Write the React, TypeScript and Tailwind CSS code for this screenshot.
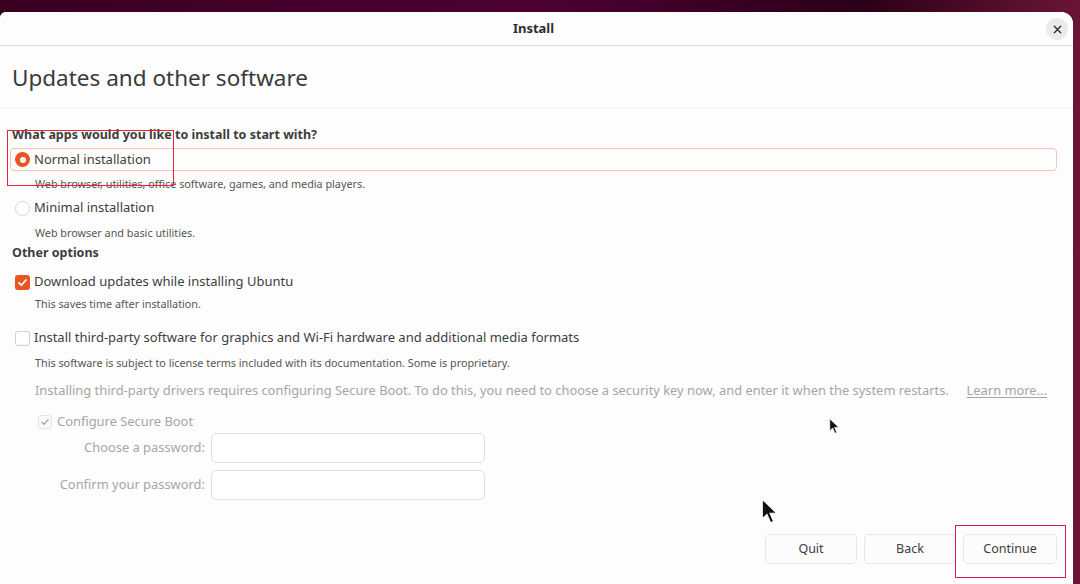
import React from "react";

const font = { fontFamily: '"Noto Sans", "Open Sans", sans-serif' };

function Radio({ checked }: { checked?: boolean }) {
  return checked ? (
    <span className="flex h-[15px] w-[15px] items-center justify-center rounded-full bg-[#e95420]">
      <span className="h-[6px] w-[6px] rounded-full bg-white" />
    </span>
  ) : (
    <span className="h-[15px] w-[15px] rounded-full border border-[#d6d6d6] bg-white" />
  );
}

function Check({ checked, disabled }: { checked?: boolean; disabled?: boolean }) {
  if (checked && !disabled) {
    return (
      <span className="flex h-[15px] w-[15px] items-center justify-center rounded-[3px] bg-[#e95420]">
        <svg width="11" height="11" viewBox="0 0 11 11">
          <path d="M2 5.8 L4.4 8.2 L9 3" fill="none" stroke="white" strokeWidth="1.8" strokeLinecap="round" strokeLinejoin="round" />
        </svg>
      </span>
    );
  }
  if (checked && disabled) {
    return (
      <span className="flex h-[14px] w-[14px] items-center justify-center rounded-[3px] border border-[#e4e4e4] bg-[#fafafa]">
        <svg width="10" height="10" viewBox="0 0 11 11">
          <path d="M2 5.8 L4.4 8.2 L9 3" fill="none" stroke="#9a9a9a" strokeWidth="1.3" strokeLinecap="round" strokeLinejoin="round" />
        </svg>
      </span>
    );
  }
  return <span className="h-[15px] w-[15px] rounded-[3px] border border-[#d0d0d0] bg-white" />;
}

function Cursor({ size }: { size: number }) {
  return (
    <svg width={size * 0.7} height={size} viewBox="0 0 14 20">
      <path d="M1 1 L1 16 L4.6 12.6 L7.4 19 L9.6 18 L6.9 11.8 L12 11.6 Z" fill="#111" stroke="#fff" strokeWidth="0.8" />
    </svg>
  );
}

export default function App() {
  return (
    <div className="relative h-[584px] w-[1080px] overflow-hidden bg-[linear-gradient(90deg,#3a0020_0%,#4c0032_50%,#2c0018_80%,#6a1535_100%)] pr-[7px] pt-[12px]" style={font}>
      <div className="flex h-full flex-col rounded-tl-[6px] rounded-tr-[12px] bg-[#fdfdfd]">
        {/* header bar */}
        <div className="relative flex h-[34px] shrink-0 items-center justify-center rounded-tl-[6px] rounded-tr-[12px] border-b border-[#d9d9d9] bg-[#fdfdfd] pr-[6px]">
          <span className="text-[13px] font-bold text-[#2e2e2e]">Install</span>
          <span className="absolute right-[5px] top-[6px] flex h-[22px] w-[22px] items-center justify-center rounded-full bg-[#ebebeb]">
            <svg width="9" height="9" viewBox="0 0 10 10">
              <path d="M1.5 1.5 L8.5 8.5 M8.5 1.5 L1.5 8.5" stroke="#333" strokeWidth="1.6" strokeLinecap="round" />
            </svg>
          </span>
        </div>

        {/* page title */}
        <div className="flex h-[62px] shrink-0 items-center border-b border-[#f2f2f2] pl-[12px] pt-[3px]">
          <h1 className="text-[22.5px] text-[#3a3a3a]">Updates and other software</h1>
        </div>

        <div className="flex flex-1 flex-col pl-[12px] pr-[16px] pt-[19px] text-[#3d3d3d]">
          <div className="text-[12.5px] font-bold leading-[16px]">What apps would you like to install to start with?</div>

          <div className="-ml-[2px] mt-[5px] flex h-[23px] items-center gap-[4px] rounded-[4px] border border-[#f4c4b4] pl-[4px]">
            <Radio checked />
            <span className="text-[13px]">Normal installation</span>
          </div>
          <div className="mt-[6px] pl-[23px] text-[10.8px] leading-[14px] text-[#555]">Web browser, utilities, office software, games, and media players.</div>

          <div className="mt-[7px] flex h-[20px] items-center gap-[4px] pl-[3px]">
            <Radio />
            <span className="text-[13px]">Minimal installation</span>
          </div>
          <div className="mt-[8px] pl-[23px] text-[10.8px] leading-[14px] text-[#555]">Web browser and basic utilities.</div>

          <div className="mt-[5px] text-[12.5px] font-bold leading-[16px]">Other options</div>

          <div className="mt-[12px] flex h-[18px] items-center gap-[4px] pl-[3px]">
            <Check checked />
            <span className="text-[13px]">Download updates while installing Ubuntu</span>
          </div>
          <div className="mt-[6px] pl-[23px] text-[10.8px] leading-[14px] text-[#555]">This saves time after installation.</div>

          <div className="mt-[18px] flex h-[18px] items-center gap-[4px] pl-[3px]">
            <Check />
            <span className="text-[13px]">Install third-party software for graphics and Wi-Fi hardware and additional media formats</span>
          </div>
          <div className="mt-[9px] pl-[23px] text-[10.8px] leading-[14px] text-[#555]">This software is subject to license terms included with its documentation. Some is proprietary.</div>

          <div className="mt-[12px] flex items-center justify-between pl-[23px] pr-[10px] text-[12.9px] leading-[16px] text-[#a6a6a6]">
            <span>Installing third-party drivers requires configuring Secure Boot. To do this, you need to choose a security key now, and enter it when the system restarts.</span>
            <span className="underline underline-offset-2">Learn more...</span>
          </div>

          <div className="mt-[16px] flex h-[16px] items-center gap-[5px] pl-[26px] text-[12.9px] text-[#a6a6a6]">
            <Check checked disabled />
            <span>Configure Secure Boot</span>
          </div>

          <div className="mt-[3px] grid w-[473px] grid-cols-[193px_274px] items-center gap-x-[6px] gap-y-[7px] text-[12.9px] text-[#a6a6a6]">
            <span className="text-right">Choose a password:</span>
            <span className="h-[30px] rounded-[5px] border border-[#e2e2e2] bg-white" />
            <span className="text-right">Confirm your password:</span>
            <span className="h-[30px] rounded-[5px] border border-[#e2e2e2] bg-white" />
          </div>

          <div className="mt-[34px] flex justify-end gap-[7px] pr-[0px] text-[12.5px] text-[#3d3d3d]">
            <button className="h-[30px] w-[92px] rounded-[5px] border border-[#e6e6e6] bg-[#fcfcfc]">Quit</button>
            <button className="h-[30px] w-[92px] rounded-[5px] border border-[#e6e6e6] bg-[#fcfcfc]">Back</button>
            <button className="h-[30px] w-[94px] rounded-[5px] border border-[#e6e6e6] bg-[#fcfcfc]">Continue</button>
          </div>
        </div>
      </div>

      {/* red marker boxes */}
      <div className="absolute left-[7px] top-[130px] h-[56px] w-[167px] border border-solid border-[#f0203c]" />
      <div className="absolute left-[955px] top-[525px] h-[53px] w-[111px] border border-solid border-[#d8204a]" />

      {/* mouse pointers */}
      <div className="absolute left-[829px] top-[418px]"><Cursor size={16} /></div>
      <div className="absolute left-[761px] top-[498px]"><Cursor size={26} /></div>
    </div>
  );
}
